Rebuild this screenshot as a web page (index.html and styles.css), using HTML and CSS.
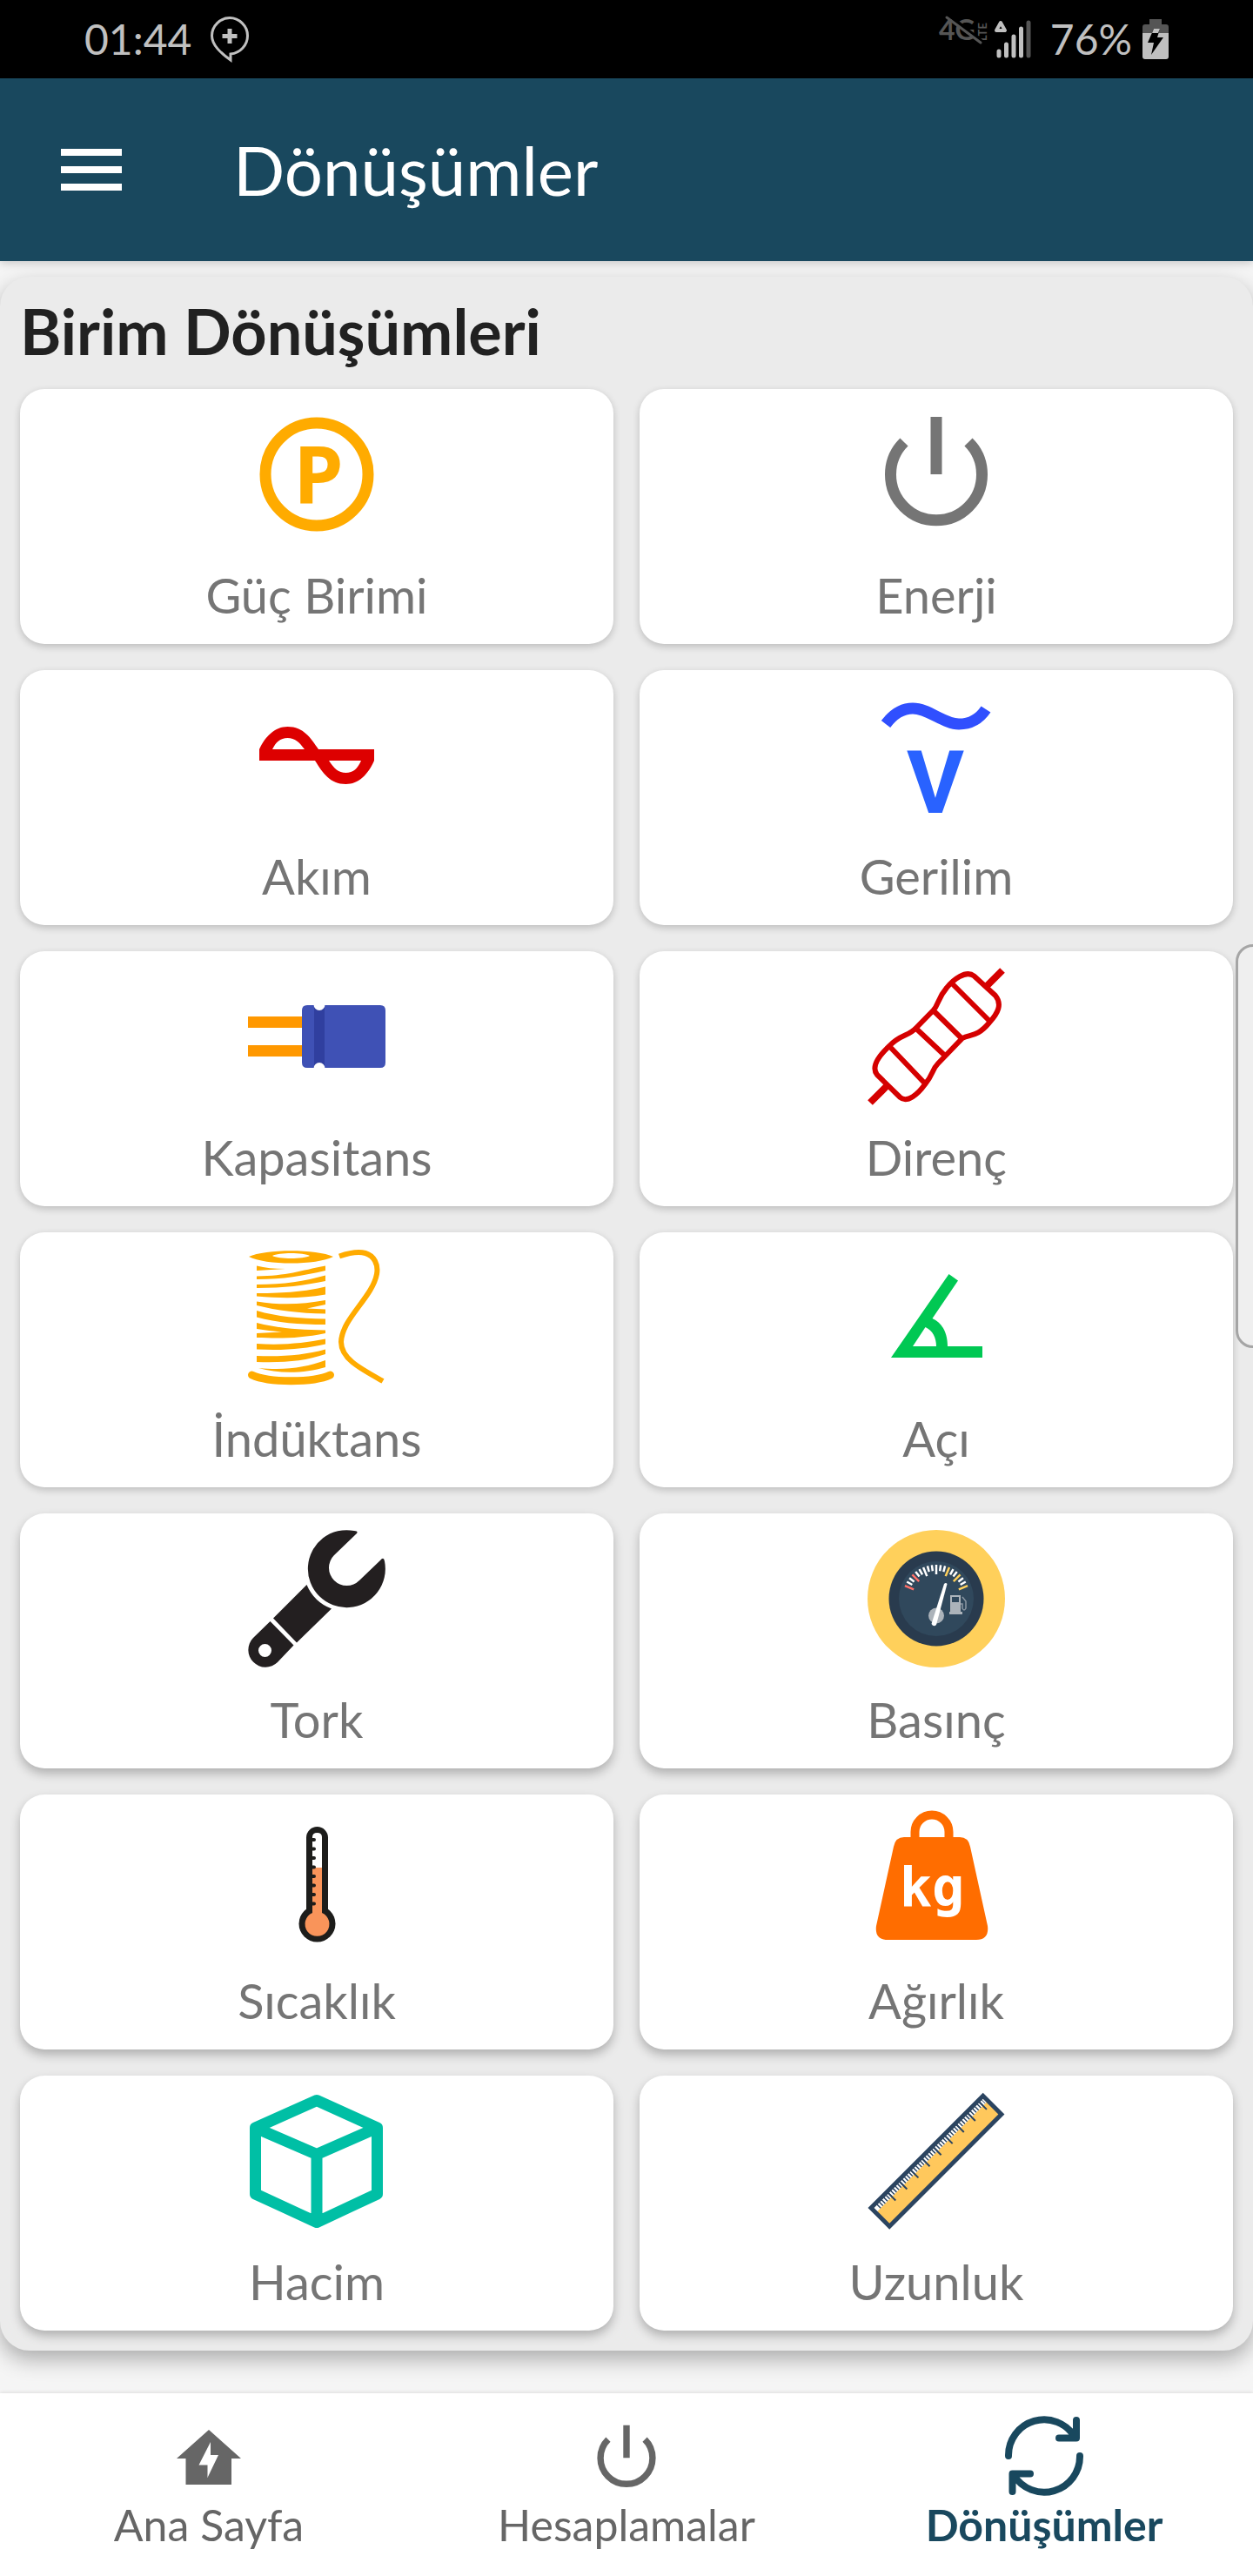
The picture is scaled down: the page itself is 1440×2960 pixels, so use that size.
FILE: index.html
```html
<!DOCTYPE html>
<html lang="tr">
<head>
    <meta charset="UTF-8">
    <meta name="viewport" content="width=device-width, initial-scale=1.0">
    <title>Dönüşümler</title>
    <link rel="stylesheet" href="styles.css">
</head>
<body>
    <div class="status-bar">
        <span class="status-text">01:44</span>
        <svg class="bubble-icon" viewBox="0 0 44 52" aria-hidden="true">
            <path d="M22 1.5C33 1.5 42.500 11 42.500 22S34 42 23 43V50C12 42 1.500 33 1.500 22S11 1.500 22 1.500Z" fill="none" stroke="#c0c0c0" stroke-width="3"/>
            <path d="M22 14V31M13.500 22.500H30.500" stroke="#c0c0c0" stroke-width="5"/>
        </svg>
        <div class="status-right">
            <svg class="lte-icon" viewBox="0 0 56 52" aria-hidden="true">
                <text x="0" y="27" font-size="32" font-weight="bold">4G</text>
                <text transform="translate(55 28) rotate(-90)" font-size="13" font-weight="bold">LTE</text>
                <path d="M11 -2L50 29" stroke="#000" stroke-width="4"/>
                <path d="M9 1L48 30" stroke="#555" stroke-width="3" stroke-linecap="round"/>
            </svg>
            <svg class="signal-icon" viewBox="0 0 42 44" aria-hidden="true">
                <path d="M7 3L12 12H2Z" fill="none" stroke="#c0c0c0" stroke-width="4" stroke-linejoin="round"/>
                <path d="M5 36V41M13.500 28V41M22 19V41M30.500 10V41" stroke="#c0c0c0" stroke-width="5" stroke-linecap="round"/>
                <path d="M39 3V41" stroke="#555" stroke-width="5" stroke-linecap="round"/>
            </svg>
            <span class="status-text">76%</span>
            <svg class="battery-icon" viewBox="0 0 30 46" aria-hidden="true">
                <path d="M8 0H22V6H27Q30 6 30 9V17H0V9Q0 6 3 6H8Z" fill="#555"/>
                <path d="M0 16H30V43Q30 46 27 46H3Q0 46 0 43Z" fill="#c0c0c0"/>
                <path d="M13 11H20L17 21H24L10 41L13 27H6Z" fill="#000"/>
                <path d="M13 11H20L18 16H11Z" fill="#c0c0c0"/>
            </svg>
        </div>
    </div>

    <header class="app-bar">
        <button class="menu-button" aria-label="Menü">
            <span></span>
            <span></span>
            <span></span>
        </button>
        <h1>Dönüşümler</h1>
    </header>

    <main class="panel">
        <h2>Birim Dönüşümleri</h2>
        <div class="card-grid">
            <a href="#" class="card">
                <svg class="card-icon" viewBox="0 0 158 158" aria-hidden="true">
                    <circle cx="79" cy="79" r="59" fill="none" stroke="#ffab00" stroke-width="13"/>
                    <text class="icon-letter" x="81" y="112" font-size="92" fill="#ffab00">P</text>
                </svg>
                <span>Güç Birimi</span>
            </a>
            <a href="#" class="card">
                <svg class="card-icon" viewBox="0 0 158 158" aria-hidden="true">
                    <path d="M42 42A52.500 52.500 0 1 0 116 42M79 13V79" fill="none" stroke="#757575" stroke-width="13"/>
                </svg>
                <span>Enerji</span>
            </a>
            <a href="#" class="card">
                <svg class="card-icon" viewBox="0 0 158 158" aria-hidden="true">
                    <path fill="#dd0000" fill-rule="evenodd" d="M13 72C20 57 31 46 45.500 46C64 46 72 59 81 72H145V85C138 101 127 112 112.500 112C94 112 86 99 77 85H13ZM28 72H65C59 64 54 59 45.500 59C37 59 32 64 28 72ZM93 85H130C126 94 121 99 112.500 99C104 99 99 94 93 85Z"/>
                </svg>
                <span>Akım</span>
            </a>
            <a href="#" class="card">
                <svg class="card-icon" viewBox="0 0 158 158" aria-hidden="true">
                    <path d="M21 43C30 31 40 25 52 25C70 25 88 43 105 43C118 43 128 38 136 26" fill="none" stroke="#304ffe" stroke-width="13"/>
                    <text class="icon-letter volt" x="78" y="145" font-size="101" fill="#2962ff">V</text>
                </svg>
                <span>Gerilim</span>
            </a>
            <a href="#" class="card">
                <svg class="card-icon" viewBox="0 0 158 158" aria-hidden="true">
                    <path d="M0 56H63V69H0ZM0 89H63V102H0Z" fill="#ff9800"/>
                    <path d="M75 43H89V115H75Z" fill="#303f9f"/>
                    <path d="M68 43H76V115H68Q62 115 62 109V49Q62 43 68 43ZM88 43H152Q158 43 158 49V109Q158 115 152 115H88Z" fill="#3f51b5"/>
                    <circle cx="82" cy="42.500" r="6.500" fill="#fff"/>
                    <circle cx="82" cy="115.500" r="6.500" fill="#fff"/>
                </svg>
                <span>Kapasitans</span>
            </a>
            <a href="#" class="card">
                <svg class="card-icon" viewBox="0 0 158 158" aria-hidden="true">
                    <path d="M147 32L122.500 9.500C113 2 98 14 91 23C80 36 82 42 75.500 49L56 69C47 79 38 76 25 90C12 102 4 114 11 123L37.500 149C46 156 58 145 66 134C76 122 74 117 81 110L109 81C118 76 126 80 140 63C150 52 155 42 147 32ZM97 18L140 61M75.500 49L108 81M56 70L89 101M25 90L66 133" fill="none" stroke="#d50000" stroke-width="6"/>
                    <path d="M155 3L137 21M3 155L22 136" stroke="#d50000" stroke-width="8"/>
                </svg>
                <span>Direnç</span>
            </a>
            <a href="#" class="card">
                <svg class="card-icon" viewBox="0 0 158 158" aria-hidden="true">
                    <g fill="#ffab00">
                        <path fill-rule="evenodd" d="M1 9C20 0 79 0 98 9C79 19 20 19 1 9ZM28 8C35 12 64 12 71 8C64 4 35 4 28 8Z"/>
                        <path d="M10 19.500Q24 23 43 23Q26 24 10 25Z"/>
                        <path d="M10 31.500C45 31 60 25 89 19.500V25C62 31 42 35 10 35Z"/>
                        <path d="M10 41C42 41 65 37 89 30.500V37C65 42 42 45 10 45Z"/>
                        <path d="M10 51C45 51 65 49 89 43.500V52.500C62 57 40 57 10 54.500Z"/>
                        <path d="M10 60.500C38 65 62 64 89 59V64L68 68.500L89 69.500V74.500C58 74 34 71 10 65Z"/>
                        <path d="M10 71C34 78 58 80 89 80.500V87C58 87 34 85 10 78.500Z"/>
                        <path d="M10 85C34 91 58 93 89 93.500V97C60 103 38 103 10 102V97L39 95.500Q24 94 10 92Z"/>
                        <path d="M10 109C42 111 65 108 89 103.500V109.500C65 115 42 117 10 115.500Z"/>
                        <path d="M10 123C42 124 65 122 89 115.500V121C65 129 42 131 10 130Z"/>
                        <path d="M12 137C45 140 66 136 89 128V136C66 143 36 144 12 137Z"/>
                    </g>
                    <path d="M4.500 145C24 154 75 154 94.500 145" fill="none" stroke="#ffab00" stroke-width="9" stroke-linecap="round"/>
                    <path d="M105 8.500C118 4 128 3 135 5C145 8 150 18 148 29C143 56 108 80 107 107C107 126 128 137 155 152" fill="none" stroke="#ffab00" stroke-width="6"/>
                </svg>
                <span>İndüktans</span>
            </a>
            <a href="#" class="card">
                <svg class="card-icon" viewBox="0 0 158 158" aria-hidden="true">
                    <path fill="#00c853" fill-rule="evenodd" d="M93.500 29L104 36.500L74.500 80C86 85 92 97 92 112H132V125H27ZM66.500 90L52 112H79C79 102 75 94 66.500 90Z"/>
                </svg>
                <span>Açı</span>
            </a>
            <a href="#" class="card">
                <svg class="card-icon" viewBox="0 0 158 158" aria-hidden="true">
                    <g fill="#231f20">
                        <path d="M122 1A44.500 44.500 0 1 0 157 36Q156 30 152 35L128 58A20.500 20.500 0 0 1 99 29L125 4Q127 1.500 122 1Z"/>
                        <path d="M67.500 63Q76 83 96 90.500L56 129.500L29 101.500Z"/>
                        <path fill-rule="evenodd" d="M25.500 105L52.500 132.500L34 152A19.800 19.800 0 0 1 6 124ZM27 138.500A7.500 7.500 0 1 0 12 138.500A7.500 7.500 0 1 0 27 138.500Z"/>
                    </g>
                </svg>
                <span>Tork</span>
            </a>
            <a href="#" class="card">
                <svg class="card-icon" viewBox="0 0 158 158" aria-hidden="true">
                    <circle cx="79" cy="79" r="79" fill="#ffd05b"/>
                    <circle cx="79" cy="79" r="54.500" fill="#293b4e"/>
                    <circle cx="79" cy="79" r="43" fill="#30485c"/>
                    <g stroke="#fff" stroke-width="2.500">
                        <path d="M79 40V51"/>
                        <path d="M79 40V51" transform="rotate(-22.500 79 79)"/>
                        <path d="M79 40V47" transform="rotate(-60 79 79)"/>
                        <path d="M79 40V47" transform="rotate(-52.500 79 79)"/>
                        <path d="M79 40V47" transform="rotate(-37.500 79 79)"/>
                        <path d="M79 40V47" transform="rotate(-30 79 79)"/>
                        <path d="M79 40V47" transform="rotate(-15 79 79)"/>
                        <path d="M79 40V47" transform="rotate(-7.500 79 79)"/>
                        <path d="M79 40V47" transform="rotate(7.500 79 79)"/>
                        <path d="M79 40V47" transform="rotate(15 79 79)"/>
                        <path d="M79 40V47" transform="rotate(30 79 79)"/>
                        <path d="M79 40V47" transform="rotate(37.500 79 79)"/>
                        <path d="M79 40V47" transform="rotate(52.500 79 79)"/>
                        <path d="M79 40V47" transform="rotate(60 79 79)"/>
                    </g>
                    <g stroke="#ff7069" stroke-width="2.500">
                        <path d="M79 40V51" transform="rotate(-67.500 79 79)"/>
                        <path d="M79 40V51" transform="rotate(-45 79 79)"/>
                    </g>
                    <g stroke="#ffd05b" stroke-width="2.500">
                        <path d="M79 40V51" transform="rotate(22.500 79 79)"/>
                        <path d="M79 40V51" transform="rotate(45 79 79)"/>
                        <path d="M79 40V51" transform="rotate(67.500 79 79)"/>
                    </g>
                    <circle cx="79" cy="98.500" r="9" fill="#acb3ba"/>
                    <path d="M88 62Q90 60 91.500 62L79 109Q76 112 73.500 108Z" fill="#fff"/>
                    <path fill="#acb3ba" fill-rule="evenodd" d="M95 75H107V94H109V97H94V94H95ZM97 77V83H105V77Z"/>
                    <path d="M107 85H109V90Q111 94 113 90V82L109 77" fill="none" stroke="#8b97a3" stroke-width="1.500"/>
                </svg>
                <span>Basınç</span>
            </a>
            <a href="#" class="card">
                <svg class="card-icon" viewBox="0 0 158 158" aria-hidden="true">
                    <rect x="67" y="18" width="25" height="110" rx="12.500" fill="#1d1d1b"/>
                    <circle cx="79.500" cy="129.500" r="21" fill="#1d1d1b"/>
                    <path d="M74 65V30Q74 25 79.500 25T85 30V65Z" fill="#fff"/>
                    <path d="M74 65H85V117A14 14 0 1 1 74 117Z" fill="#f9945a"/>
                    <path d="M74 33H76M74 43.500H76M74 54H76M74 64.500H76M74 75H76M74 85.500H76M74 96H76M74 106.500H76" stroke="#1d1d1b" stroke-width="4" stroke-linecap="round"/>
                </svg>
                <span>Sıcaklık</span>
            </a>
            <a href="#" class="card">
                <svg class="card-icon" viewBox="0 0 158 158" aria-hidden="true">
                    <path d="M54.500 32V24A19.500 19.500 0 0 1 93.500 24V32" fill="none" stroke="#ff6d00" stroke-width="10"/>
                    <path d="M42 30H106Q116 30 118 41L138 132Q140 148 125 148H23Q8 148 10 132L30 41Q32 30 42 30Z" fill="#ff6d00"/>
                    <text class="icon-letter mono" x="74" y="109" font-size="62" fill="#fff">kg</text>
                </svg>
                <span>Ağırlık</span>
            </a>
            <a href="#" class="card">
                <svg class="card-icon" viewBox="0 0 158 158" aria-hidden="true">
                    <path d="M79 9.500L148.500 41V117L79 149.500L8.500 117V41ZM8.500 41L79 71.500L148.500 41M79 71.500V149" fill="none" stroke="#00bfa5" stroke-width="13" stroke-linejoin="round"/>
                </svg>
                <span>Hacim</span>
            </a>
            <a href="#" class="card">
                <svg class="card-icon" viewBox="0 0 158 158" aria-hidden="true">
                    <g transform="translate(4 133) rotate(-45)">
                        <rect width="182" height="30" fill="#ffc85c"/>
                        <path d="M2 5H180" stroke="#fff" stroke-width="6"/>
                        <path d="M7 5H178" stroke="#2b4460" stroke-width="6" stroke-dasharray="1.500 2.200"/>
                        <path d="M26 0V14M44.500 0V14M63 0V14M81.500 0V14M100 0V14M118.500 0V14M137 0V14M155.500 0V14M174 0V14" stroke="#2b4460" stroke-width="2"/>
                        <rect width="182" height="30" fill="none" stroke="#2b4460" stroke-width="5"/>
                    </g>
                </svg>
                <span>Uzunluk</span>
            </a>
        </div>
    </main>

    <nav class="bottom-nav">
        <a href="#" class="nav-item">
            <svg class="nav-icon" viewBox="0 0 90 90" aria-hidden="true">
                <path fill="#666" fill-rule="evenodd" d="M45 15L82 48H71V78H18.500V48H8ZM47 29L33.500 55.500H43.500V70L56 44H47Z"/>
            </svg>
            <span>Ana Sayfa</span>
        </a>
        <a href="#" class="nav-item">
            <svg class="nav-icon" viewBox="0 -4 158 158" aria-hidden="true">
                <path d="M42 42A52.500 52.500 0 1 0 116 42M79 13V79" fill="none" stroke="#666" stroke-width="13"/>
            </svg>
            <span>Hesaplamalar</span>
        </a>
        <a href="#" class="nav-item active">
            <svg class="nav-icon" viewBox="0 0 90 90" aria-hidden="true">
                <path d="M4 45A41 41 0 0 1 80 23M82 4V24.500H62M86 45A41 41 0 0 1 10 67M8.500 86V65.500H29" fill="none" stroke="#19485e" stroke-width="8" stroke-linecap="round" stroke-linejoin="round"/>
            </svg>
            <span>Dönüşümler</span>
        </a>
    </nav>

    <!-- Edge panel handle, floats over the cards -->
    <div class="edge-handle"></div>
</body>
</html>
```
FILE: styles.css
```css
* {
    box-sizing: border-box;
}

body {
    font-family: Lato, "Open Sans", sans-serif;
    background-color: #f5f5f5;
    margin: 0;
    min-height: 100vh;
    display: flex;
    flex-direction: column;
    position: relative;
    overflow-x: hidden;
}

svg {
    display: block;
    flex: none;
    overflow: visible;
}

a {
    text-decoration: none;
}

.status-bar {
    display: flex;
    align-items: center;
    gap: 22px;
    height: 90px;
    padding: 0 97px;
    background-color: #000;
}

.status-text {
    color: #c0c0c0;
    font-size: 48px;
    line-height: 60px;
}

.bubble-icon {
    width: 44px;
    height: 52px;
}

.status-right {
    display: flex;
    align-items: center;
    gap: 8px;
    margin-left: auto;
}

.status-right .status-text {
    margin: 0 4px 0 14px;
}

.lte-icon {
    width: 56px;
    height: 52px;
    fill: #555;
}

.signal-icon {
    width: 42px;
    height: 44px;
}

.battery-icon {
    width: 30px;
    height: 46px;
}

.app-bar {
    display: flex;
    align-items: center;
    gap: 128px;
    height: 210px;
    padding: 0 70px;
    background-color: #19485e;
    box-shadow: 0 2px 10px rgba(0, 0, 0, 0.2);
}

.menu-button {
    display: flex;
    flex-direction: column;
    gap: 12px;
    width: 70px;
    padding: 0;
    background: none;
    border: none;
    cursor: pointer;
}

.menu-button span {
    height: 8px;
    background-color: #fff;
}

h1 {
    margin: 0;
    color: #fff;
    font-size: 78px;
    font-weight: 400;
    line-height: 92px;
}

.panel {
    margin: 18px 0 49px;
    padding: 18px 23px 23px;
    background-color: #ebebeb;
    border-radius: 34px;
    box-shadow: 0 10px 24px rgba(0, 0, 0, 0.3);
}

h2 {
    margin: 0 0 23px;
    color: #212121;
    font-size: 72px;
    font-weight: 700;
    line-height: 88px;
}

.card-grid {
    display: grid;
    grid-template-columns: 1fr 1fr;
    gap: 30px;
}

.card {
    display: flex;
    flex-direction: column;
    align-items: center;
    gap: 26px;
    padding: 19px 20px 22px;
    background-color: #fff;
    border-radius: 28px;
    box-shadow: 0 3px 8px rgba(0, 0, 0, 0.2);
    color: #757575;
    font-size: 56px;
    line-height: 68px;
}

/* lower rows sit a bit higher */
.card:nth-child(n+9) {
    box-shadow: 0 6px 12px rgba(0, 0, 0, 0.25);
}

.card-icon {
    width: 158px;
    height: 158px;
}

.icon-letter {
    font-family: "Open Sans", sans-serif;
    font-weight: 700;
    text-anchor: middle;
}

.icon-letter.volt {
    font-family: Roboto, sans-serif;
}

.icon-letter.mono {
    font-family: "DejaVu Sans Mono", monospace;
}

.bottom-nav {
    display: flex;
    margin-top: auto;
    padding: 27px 0 29px;
    background-color: #fff;
    position: relative;
    box-shadow: 0 -1px 4px rgba(0, 0, 0, 0.1);
}

.nav-item {
    flex: 1;
    display: flex;
    flex-direction: column;
    align-items: center;
    gap: 4px;
    color: #666;
    font-size: 50px;
    line-height: 60px;
}

.nav-item.active {
    color: #19485e;
    font-weight: 700;
}

.nav-icon {
    width: 90px;
    height: 90px;
}

.edge-handle {
    position: absolute;
    top: 1085px;
    right: -4px;
    width: 24px;
    height: 464px;
    background-color: #efefef;
    border: 3px solid #a5a5a5;
    border-radius: 20px 0 0 20px;
}
```
